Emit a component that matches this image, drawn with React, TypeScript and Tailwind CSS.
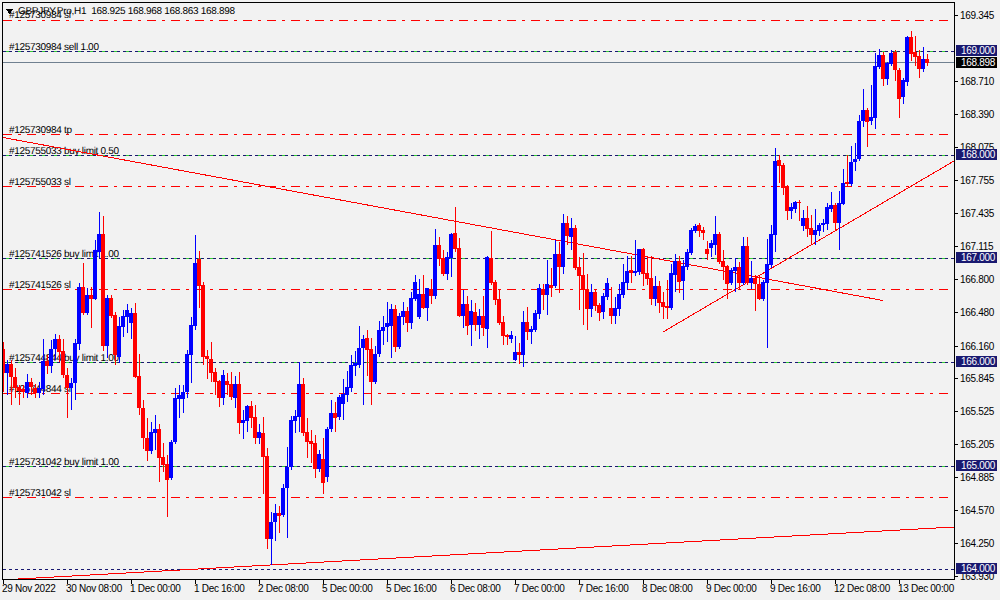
// GBPJPY H1 chart, candles are [up, high, bodyTop, bodyBottom, low] in page pixels
const candles: [number, number, number, number, number][] = [
  [0, 342, 349, 373, 392], [1, 360, 364, 373, 395], [0, 360, 364, 377, 405], [0, 368, 377, 388, 398],
  [0, 385, 387, 391, 405], [0, 385, 389, 392, 398], [1, 374, 382, 393, 398], [0, 378, 382, 387, 395],
  [0, 384, 388, 393, 398], [1, 382, 388, 393, 398], [1, 339, 361, 389, 395], [0, 355, 361, 366, 374],
  [1, 340, 349, 366, 373], [1, 334, 339, 349, 360], [0, 335, 339, 352, 362], [0, 339, 351, 375, 378],
  [0, 368, 375, 388, 418], [1, 378, 383, 388, 410], [1, 339, 343, 383, 400], [1, 283, 287, 344, 350],
  [0, 263, 287, 313, 315], [1, 288, 295, 313, 315], [0, 287, 295, 299, 328], [1, 240, 250, 299, 300],
  [1, 212, 234, 252, 258], [0, 216, 234, 346, 351], [1, 295, 298, 346, 358], [0, 295, 298, 316, 318],
  [0, 312, 315, 355, 365], [1, 317, 326, 357, 363], [1, 310, 316, 327, 337], [1, 304, 310, 317, 333],
  [1, 308, 313, 323, 339], [0, 303, 313, 377, 378], [0, 354, 376, 408, 415], [0, 400, 408, 438, 449],
  [0, 418, 438, 451, 461], [1, 422, 432, 451, 454], [1, 415, 429, 433, 450], [0, 424, 429, 458, 482],
  [0, 443, 457, 465, 472], [0, 455, 464, 480, 517], [1, 440, 442, 478, 480], [1, 388, 398, 442, 444],
  [1, 385, 395, 399, 418], [1, 385, 392, 399, 413], [1, 350, 354, 392, 398], [1, 317, 325, 355, 383],
  [1, 235, 263, 326, 330], [0, 251, 259, 286, 308], [0, 282, 285, 357, 365], [0, 350, 356, 359, 379],
  [0, 342, 359, 373, 382], [0, 368, 372, 382, 395], [0, 380, 381, 398, 407], [1, 370, 375, 398, 405],
  [0, 373, 381, 385, 395], [0, 372, 384, 397, 400], [1, 376, 384, 398, 408], [0, 372, 384, 423, 434],
  [1, 410, 420, 423, 439], [1, 405, 406, 421, 432], [0, 401, 406, 418, 428], [0, 405, 417, 438, 444],
  [1, 424, 432, 438, 444], [0, 417, 433, 457, 494], [0, 448, 456, 539, 549], [1, 512, 522, 539, 565],
  [1, 504, 513, 522, 541], [0, 506, 513, 516, 533], [1, 484, 488, 515, 517], [1, 447, 467, 488, 538],
  [1, 416, 420, 467, 470], [1, 410, 416, 421, 433], [1, 362, 384, 417, 432], [0, 378, 384, 433, 436],
  [0, 418, 432, 442, 458], [0, 430, 441, 444, 463], [0, 435, 443, 469, 478], [1, 450, 454, 469, 472],
  [0, 438, 459, 483, 494], [1, 427, 429, 477, 482], [1, 400, 413, 429, 432], [0, 402, 413, 418, 432],
  [1, 395, 397, 417, 420], [1, 379, 394, 404, 420], [1, 371, 387, 395, 402], [1, 355, 365, 388, 392],
  [1, 351, 363, 366, 376], [1, 326, 348, 365, 368], [1, 335, 339, 348, 405], [0, 330, 338, 350, 376],
  [0, 338, 349, 382, 405], [1, 346, 354, 382, 384], [1, 321, 330, 354, 357], [1, 316, 327, 331, 345],
  [1, 302, 323, 327, 342], [1, 304, 309, 326, 358], [0, 305, 309, 347, 352], [1, 313, 316, 347, 349],
  [1, 302, 311, 317, 325], [0, 307, 311, 323, 332], [1, 292, 298, 323, 329], [1, 275, 282, 299, 301],
  [1, 279, 294, 317, 319], [0, 275, 294, 308, 309], [1, 288, 288, 308, 321], [0, 279, 289, 296, 304],
  [1, 229, 245, 296, 299], [0, 237, 245, 259, 266], [0, 250, 258, 274, 276], [1, 252, 257, 274, 280],
  [1, 233, 234, 258, 277], [0, 207, 233, 249, 252], [0, 238, 248, 316, 317], [1, 290, 304, 316, 328],
  [0, 296, 304, 326, 335], [1, 300, 311, 325, 346], [0, 303, 312, 325, 331], [1, 309, 316, 325, 339],
  [0, 296, 316, 328, 336], [1, 256, 257, 329, 348], [0, 231, 258, 283, 285], [0, 280, 282, 300, 305],
  [0, 289, 299, 323, 325], [0, 316, 322, 336, 345], [0, 334, 335, 337, 345], [1, 331, 335, 339, 343],
  [1, 336, 352, 360, 361], [0, 343, 352, 355, 364], [1, 311, 322, 355, 367], [0, 307, 322, 332, 340],
  [1, 326, 329, 332, 344], [1, 310, 313, 330, 332], [1, 284, 288, 314, 319], [0, 284, 289, 295, 310],
  [1, 260, 284, 295, 315], [0, 268, 285, 288, 297], [1, 240, 254, 286, 288], [0, 242, 254, 267, 293],
  [1, 214, 223, 267, 274], [0, 216, 223, 236, 245], [1, 218, 228, 237, 250], [0, 225, 228, 268, 270],
  [0, 257, 267, 276, 310], [0, 253, 275, 290, 325], [0, 274, 289, 309, 330], [1, 284, 292, 309, 317],
  [0, 289, 292, 306, 311], [0, 303, 305, 313, 321], [1, 293, 296, 312, 319], [1, 278, 283, 297, 300],
  [0, 287, 308, 316, 324], [1, 297, 308, 316, 324], [1, 284, 294, 309, 316], [1, 264, 282, 295, 298],
  [1, 256, 271, 283, 290], [0, 256, 270, 273, 283], [1, 240, 271, 273, 276], [1, 249, 249, 272, 275],
  [0, 248, 249, 274, 286], [0, 256, 273, 279, 285], [0, 256, 278, 299, 305], [1, 276, 286, 299, 306],
  [0, 281, 286, 303, 313], [0, 292, 302, 307, 319], [0, 280, 306, 308, 319], [1, 264, 273, 308, 310],
  [1, 254, 261, 275, 292], [0, 256, 261, 282, 293], [1, 260, 266, 281, 300], [1, 249, 252, 267, 270],
  [1, 228, 230, 253, 255], [1, 224, 226, 231, 233], [0, 223, 225, 231, 237], [0, 227, 230, 233, 240],
  [0, 241, 249, 254, 260], [1, 240, 243, 248, 257], [1, 216, 234, 245, 255], [0, 232, 234, 262, 264],
  [0, 250, 261, 267, 280], [0, 265, 266, 284, 299], [1, 268, 270, 283, 285], [1, 258, 267, 271, 292],
  [0, 262, 267, 283, 290], [1, 237, 246, 283, 285], [0, 237, 246, 283, 285], [1, 261, 278, 283, 289],
  [0, 275, 278, 284, 311], [0, 276, 284, 299, 300], [1, 280, 282, 299, 301], [1, 239, 264, 283, 348],
  [1, 225, 234, 265, 268], [1, 148, 161, 235, 252], [0, 155, 160, 166, 183], [0, 163, 165, 188, 195],
  [0, 185, 186, 211, 220], [1, 203, 207, 211, 219], [1, 201, 202, 209, 213], [0, 200, 202, 203, 221],
  [1, 210, 218, 226, 231], [0, 206, 218, 229, 237], [0, 215, 228, 235, 245], [1, 209, 230, 235, 245],
  [1, 223, 225, 231, 236], [1, 219, 223, 225, 232], [1, 203, 207, 224, 230], [1, 192, 205, 209, 212],
  [0, 203, 205, 223, 230], [1, 191, 203, 223, 250], [1, 169, 183, 204, 205], [0, 155, 182, 184, 187],
  [1, 146, 162, 184, 186], [1, 143, 159, 162, 171], [1, 115, 121, 159, 161], [1, 89, 110, 121, 127],
  [0, 108, 110, 122, 147], [1, 85, 117, 121, 125], [1, 53, 66, 118, 129], [1, 49, 55, 67, 69],
  [0, 52, 55, 79, 86], [1, 62, 63, 79, 85], [1, 50, 53, 64, 66], [0, 50, 52, 70, 81],
  [0, 68, 70, 99, 118], [1, 78, 80, 97, 104], [1, 36, 37, 82, 86], [0, 31, 37, 54, 61],
  [0, 36, 52, 57, 66], [0, 50, 56, 69, 78], [1, 47, 59, 69, 72], [0, 54, 59, 63, 66],
];

const orderLevels = [51, 155, 258, 362, 466];
const stopLevels = [20, 134, 186, 289, 393, 497];

const orderLabels: [string, number][] = [
  ['#125730984 sl', 18],
  ['#125730984 sell 1.00', 50],
  ['#125730984 tp', 133],
  ['#125755033 buy limit 0.50', 154],
  ['#125755033 sl', 185],
  ['#125741526 buy limit 1.00', 257],
  ['#125741526 sl', 288],
  ['#125744844 buy limit 1.00', 361],
  ['#125744844 sl', 392],
  ['#125731042 buy limit 1.00', 465],
  ['#125731042 sl', 496],
];

const prices: [string, number][] = [
  ['169.345', 15], ['168.710', 81], ['168.390', 114], ['168.075', 147], ['167.755', 180], ['167.435', 213],
  ['167.115', 246], ['166.800', 279], ['166.480', 312], ['166.160', 346], ['165.845', 378], ['165.525', 411],
  ['165.205', 444], ['164.885', 477], ['164.570', 510], ['164.250', 543], ['163.930', 576],
];

const tags: [string, number, string][] = [
  ['169.000', 45, 'bg-[#191970]'],
  ['168.898', 57, 'bg-black'],
  ['168.000', 149, 'bg-[#191970]'],
  ['167.000', 252, 'bg-[#191970]'],
  ['166.000', 356, 'bg-[#191970]'],
  ['165.000', 460, 'bg-[#191970]'],
  ['164.000', 563, 'bg-[#191970]'],
];

const times = [
  '29 Nov 2022', '30 Nov 08:00', '1 Dec 00:00', '1 Dec 16:00', '2 Dec 08:00', '5 Dec 00:00', '5 Dec 16:00',
  '6 Dec 08:00', '7 Dec 00:00', '7 Dec 16:00', '8 Dec 08:00', '9 Dec 00:00', '9 Dec 16:00', '12 Dec 08:00',
  '13 Dec 00:00',
];

function Plot() {
  return (
    <svg width={951} height={576} viewBox="3 3 951 576" className="block" shapeRendering="crispEdges">
      <g fontFamily="'Liberation Sans', sans-serif" fontSize={10} letterSpacing={-0.3} fill="#000" textRendering="geometricPrecision">
        <text x={18} y={14} xmlSpace="preserve">GBPJPY.Pro,H1  168.925 168.968 168.863 168.898</text>
        {orderLabels.map(([label, y]) => (
          <text key={label} x={9} y={y}>{label}</text>
        ))}
      </g>
      <polygon points="6,9 13,9 9.5,14" fill="#000" />

      {stopLevels.map((y) => (
        <line key={y} x1={3} x2={948} y1={y + 0.5} y2={y + 0.5} stroke="#ff0000" strokeDasharray="9 6 3 6" />
      ))}
      {orderLevels.map((y) => (
        <g key={y}>
          <line x1={3} x2={954} y1={y + 0.5} y2={y + 0.5} stroke="#191970" strokeDasharray="9 3" />
          <line x1={6} x2={954} y1={y + 0.5} y2={y + 0.5} stroke="#32cd32" strokeDasharray="3 9" />
        </g>
      ))}
      <line x1={3} x2={954} y1={569.5} y2={569.5} stroke="#191970" strokeDasharray="3 3" />
      <line x1={3} x2={954} y1={62.5} y2={62.5} stroke="#708090" />

      <line x1={3} y1={137.5} x2={883} y2={300.5} stroke="#ff0000" />
      <line x1={663} y1={332} x2={954} y2={161} stroke="#ff0000" />
      <line x1={18} y1={579} x2={954} y2={527} stroke="#ff0000" />

      {candles.map(([up, high, top, bottom, low], i) => {
        const c = 4 * i + 3;
        const color = up ? '#0000ff' : '#ff0000';
        return (
          <g key={i} fill={color}>
            <rect x={c} y={high} width={1} height={low - high} />
            <rect x={c - 2} y={top} width={4} height={bottom - top} />
          </g>
        );
      })}
    </svg>
  );
}

function PriceAxis() {
  return (
    <div className="relative flex-1">
      {prices.map(([label, y]) => (
        <div key={label} className="absolute left-0 flex items-center gap-[2px] h-[12px]" style={{ top: y - 8 }}>
          <span className="w-[3px] h-px bg-black" />
          <span className="mt-[2px]">{label}</span>
        </div>
      ))}
      {tags.map(([label, y, bg]) => (
        <div
          key={label}
          className={`absolute left-[1px] w-[41px] h-[11px] flex items-center pl-[5px] text-white ${bg}`}
          style={{ top: y - 2 }}
        >
          {label}
        </div>
      ))}
    </div>
  );
}

export default function App() {
  return (
    <div className="w-[1000px] h-[600px] bg-[#f2f2f2] pt-[2px] pl-[2px] overflow-hidden font-['Liberation_Sans',sans-serif] text-[10px] tracking-[-0.3px] leading-none text-black">
      <div className="flex h-[578px]">
        <div className="border border-black shrink-0">
          <Plot />
        </div>
        <PriceAxis />
      </div>
      <div className="flex">
        {times.map((t) => (
          <div key={t} className="w-[64px] shrink-0">
            <div className="ml-[1px] w-px h-[4px] bg-black" />
            <div className="whitespace-nowrap">{t}</div>
          </div>
        ))}
      </div>
    </div>
  );
}
